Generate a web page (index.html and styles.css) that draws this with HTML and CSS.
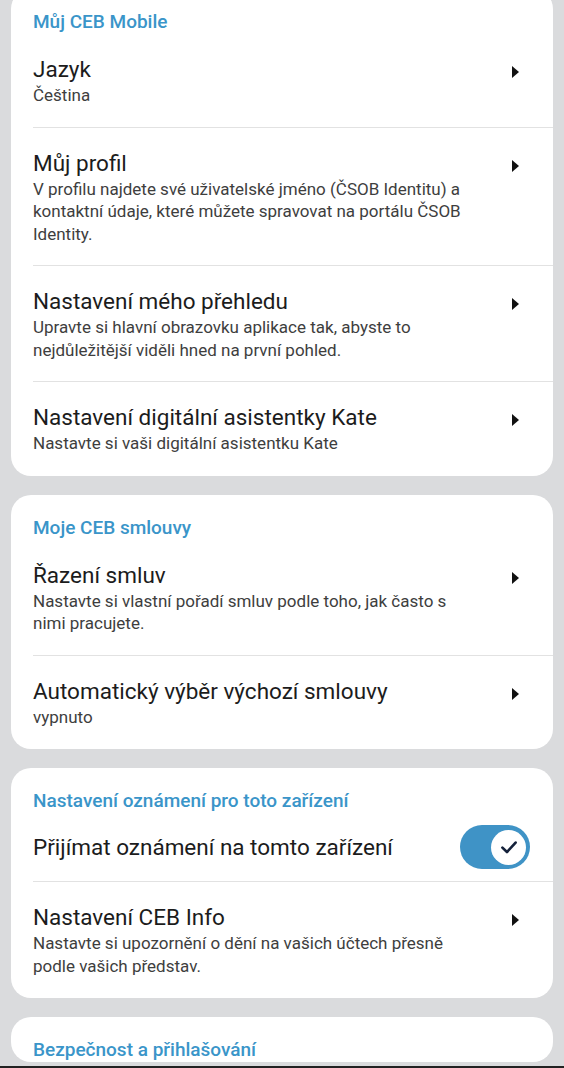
FILE: index.html
```html
<!DOCTYPE html>
<html lang="cs">
<head>
<meta charset="utf-8">
<link rel="stylesheet" href="styles.css">
</head>
<body>
<main class="page">
  <section class="card card-first">
    <h2 class="card-title">Můj CEB Mobile</h2>
    <div class="row">
      <div class="row-text"><div class="title">Jazyk</div><div class="sub">Čeština</div></div>
      <svg class="arrow" viewBox="0 0 7 12"><path d="M0 0L7 6L0 12Z"/></svg>
    </div>
    <div class="row">
      <div class="row-text"><div class="title">Můj profil</div><div class="sub">V profilu najdete své uživatelské jméno (ČSOB Identitu) a kontaktní údaje, které můžete spravovat na portálu ČSOB Identity.</div></div>
      <svg class="arrow" viewBox="0 0 7 12"><path d="M0 0L7 6L0 12Z"/></svg>
    </div>
    <div class="row">
      <div class="row-text"><div class="title">Nastavení mého přehledu</div><div class="sub">Upravte si hlavní obrazovku aplikace tak, abyste to nejdůležitější viděli hned na první pohled.</div></div>
      <svg class="arrow" viewBox="0 0 7 12"><path d="M0 0L7 6L0 12Z"/></svg>
    </div>
    <div class="row last">
      <div class="row-text"><div class="title">Nastavení digitální asistentky Kate</div><div class="sub">Nastavte si vaši digitální asistentku Kate</div></div>
      <svg class="arrow" viewBox="0 0 7 12"><path d="M0 0L7 6L0 12Z"/></svg>
    </div>
  </section>

  <section class="card">
    <h2 class="card-title">Moje CEB smlouvy</h2>
    <div class="row">
      <div class="row-text"><div class="title">Řazení smluv</div><div class="sub">Nastavte si vlastní pořadí smluv podle toho, jak často s nimi pracujete.</div></div>
      <svg class="arrow" viewBox="0 0 7 12"><path d="M0 0L7 6L0 12Z"/></svg>
    </div>
    <div class="row last">
      <div class="row-text"><div class="title">Automatický výběr výchozí smlouvy</div><div class="sub">vypnuto</div></div>
      <svg class="arrow" viewBox="0 0 7 12"><path d="M0 0L7 6L0 12Z"/></svg>
    </div>
  </section>

  <section class="card">
    <h2 class="card-title">Nastavení oznámení pro toto zařízení</h2>
    <div class="row row-toggle">
      <div class="row-text"><div class="title">Přijímat oznámení na tomto zařízení</div></div>
      <div class="toggle"><span class="knob"><svg viewBox="0 0 20 20"><path d="M4.5 10.5L8.3 14.2L15.5 6.3"/></svg></span></div>
    </div>
    <div class="row last">
      <div class="row-text"><div class="title">Nastavení CEB Info</div><div class="sub">Nastavte si upozornění o dění na vašich účtech přesně podle vašich představ.</div></div>
      <svg class="arrow" viewBox="0 0 7 12"><path d="M0 0L7 6L0 12Z"/></svg>
    </div>
  </section>

  <section class="card">
    <h2 class="card-title">Bezpečnost a přihlašování</h2>
  </section>
</main>
</body>
</html>
```

FILE: styles.css
```css
* { box-sizing: border-box; }
html, body { margin: 0; padding: 0; }
body {
  background: #dadbdd;
  font-family: Roboto, "Noto Sans", sans-serif;
  height: 1068px;
  overflow: hidden;
}
.page {
  display: flex;
  flex-direction: column;
  gap: 19px;
  padding: 0 11px;
  margin-top: -11px;
}
.card {
  background: #ffffff;
  border-radius: 20px;
  padding-top: 21px;
}
.card-title {
  margin: 0;
  padding: 0 22px;
  font-size: 19px;
  line-height: 24px;
  font-weight: 500;
  color: #3a95c9;
}
.row {
  display: flex;
  align-items: flex-start;
  margin-left: 22px;
  padding: 20px 34px 20px 0;
  border-bottom: 1px solid #e2e2e2;
}
.row.last { border-bottom: none; padding-bottom: 21px; }
.row-text { flex: 1; min-width: 0; padding-right: 38px; }
.title {
  font-size: 22.5px;
  line-height: 30px;
  color: #1c1c1c;
}
.sub {
  font-size: 17px;
  line-height: 22.5px;
  color: #3e3e3e;
  margin-top: 0;
}
.arrow {
  width: 7px;
  height: 12px;
  margin-top: 12px;
  fill: #111;
  flex: none;
}
.row-toggle {
  align-items: center;
  padding: 12px 23px 12px 0;
}
.toggle {
  width: 70px;
  height: 44px;
  border-radius: 22px;
  background: #3f93c6;
  display: flex;
  align-items: center;
  justify-content: flex-end;
  padding-right: 4px;
  flex: none;
}
.knob {
  width: 35px;
  height: 35px;
  border-radius: 50%;
  background: #fff;
  display: flex;
  align-items: center;
  justify-content: center;
}
.knob svg {
  width: 24px;
  height: 24px;
  fill: none;
  stroke: #14213a;
  stroke-width: 2.2;
  stroke-linecap: round;
  stroke-linejoin: round;
}
body::after {
  content: "";
  position: fixed;
  left: 0;
  right: 0;
  bottom: 0;
  height: 2px;
  background: #222;
}
```
